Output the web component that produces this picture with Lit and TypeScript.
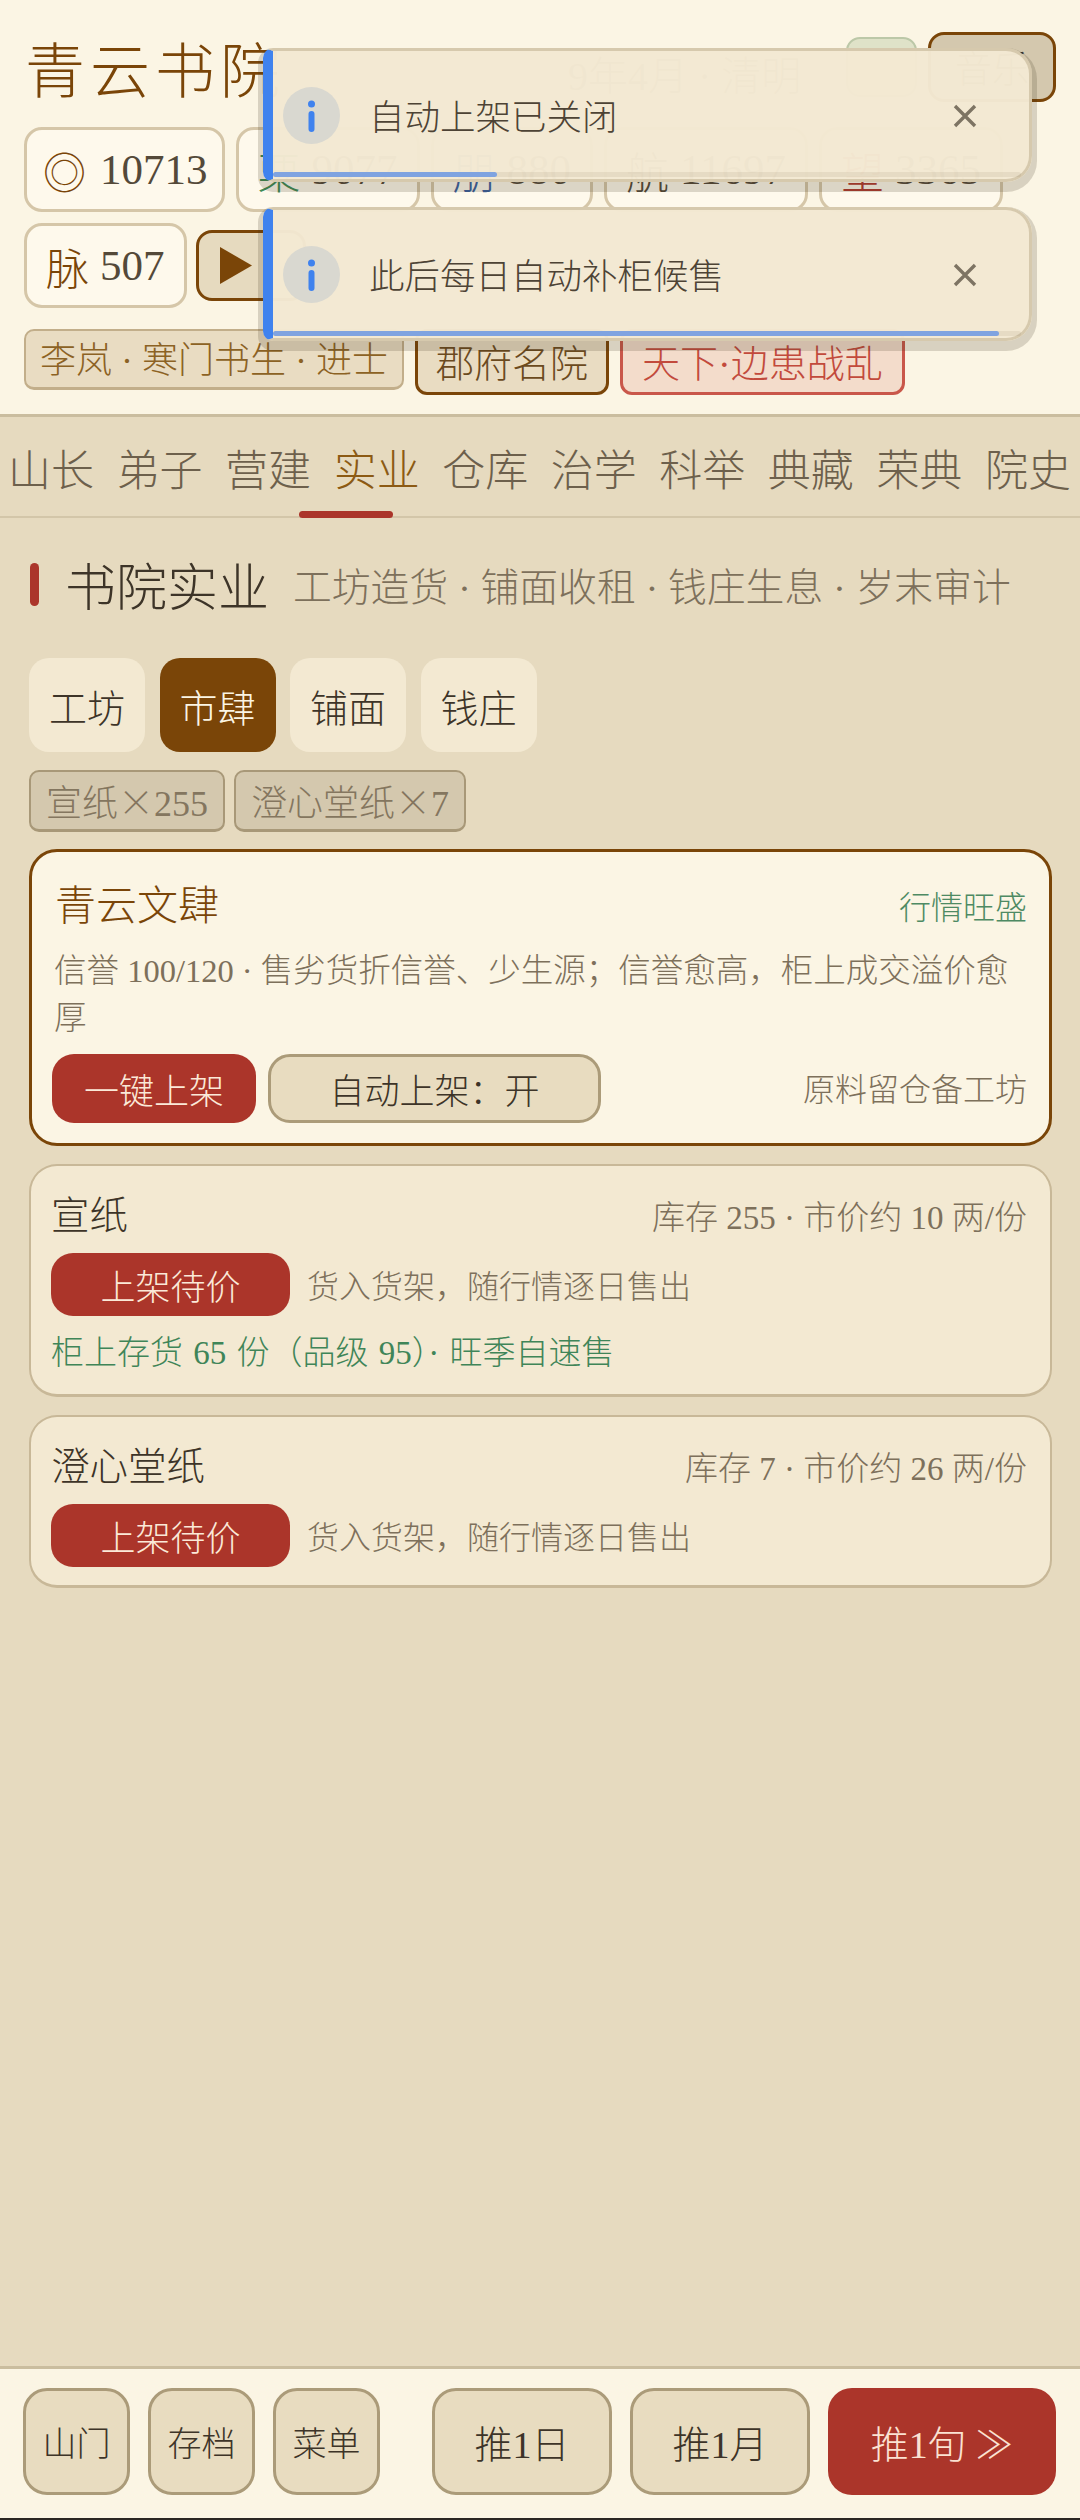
import { LitElement, css, html } from 'lit';
import { customElement } from 'lit/decorators.js';

const TABS = ['山长', '弟子', '营建', '实业', '仓库', '治学', '科举', '典藏', '荣典', '院史'];
const SUBTABS = ['工坊', '市肆', '铺面', '钱庄'];

@customElement('app-root')
export class AppRoot extends LitElement {
  static styles = css`
    :host {
      display: flex;
      flex-direction: column;
      position: relative;
      height: 2520px;
      background: #e6dabf;
      color: #3d3428;
      font-family: 'Liberation Serif', 'Noto Sans CJK SC', serif;
      font-weight: 200;
      overflow: hidden;
      box-sizing: border-box;
      border-bottom: 2px solid #2a2622;
    }

    button {
      font: inherit;
      color: inherit;
      padding: 0;
      background: none;
      border: none;
    }

    /* header */
    header {
      background: #fbf5e4;
      border-bottom: 3px solid #cabd9f;
      height: 417px;
      flex: none;
      box-sizing: border-box;
      padding: 32px 24px 0;
    }

    .top {
      display: flex;
      align-items: flex-start;
      height: 95px;
    }

    .brand {
      font-size: 60px;
      line-height: 76px;
      letter-spacing: 5px;
      color: #7a4508;
      margin: 3px 0 0 1px;
    }

    .date {
      margin-left: 283px;
      margin-top: 20px;
      font-size: 40px;
      line-height: 50px;
      color: #7d705b;
      white-space: nowrap;
    }

    .top-actions {
      display: flex;
      gap: 11px;
      margin-left: auto;
    }

    .top-green {
      width: 71px;
      height: 60px;
      margin-top: 5px;
      background: #dfe2c8;
      border: 2px solid #bcc8a8;
      border-radius: 14px;
      box-sizing: border-box;
    }

    .top-brown {
      width: 128px;
      height: 70px;
      background: #d4c8ae;
      border: 3px solid #7a4508;
      border-radius: 16px;
      box-sizing: border-box;
      font-size: 37px;
    }

    .stats {
      display: flex;
      flex-wrap: wrap;
      gap: 11px;
    }

    .stat {
      display: flex;
      align-items: center;
      gap: 11px;
      height: 85px;
      padding: 0 19px;
      box-sizing: border-box;
      background: #fef9ec;
      border: 3px solid #d5c6a8;
      border-radius: 18px;
      font-size: 43px;
      color: #544939;
      white-space: nowrap;
    }

    .stat.coin { padding: 0 14px 0 16px; gap: 14px; }
    .stat .k { color: #7a4508; }
    .stat .g { color: #3f8a55; }
    .stat .b { color: #3a5f9f; }
    .stat .r { color: #b03a2e; }

    .play {
      width: 110px;
      height: 71px;
      margin: 7px 0 0 -2px;
      box-sizing: border-box;
      background: #e6dabf;
      border: 3px solid #7a4508;
      border-radius: 16px;
      display: flex;
      align-items: center;
      padding-left: 21px;
    }

    .tags {
      display: flex;
      gap: 11px;
      align-items: flex-start;
      margin-top: 21px;
    }

    .tag {
      height: 61px;
      box-sizing: border-box;
      padding: 0 14px;
      font-size: 36px;
      line-height: 60px;
      border: 2px solid #c2ae8a;
      border-bottom-width: 3px;
      background: #e9dcc2;
      color: #8c6224;
      border-radius: 10px;
      white-space: nowrap;
    }

    .tag.outline {
      height: 66px;
      line-height: 64px;
      font-size: 38px;
      padding: 0 18px;
      border: 3px solid #7a4508;
      color: #6b4a1e;
      border-radius: 12px;
    }

    .tag.alert {
      height: 66px;
      line-height: 64px;
      font-size: 38px;
      padding: 0 19px;
      border: 3px solid #c9574a;
      background: #f3dccb;
      color: #c24a3c;
      border-radius: 12px;
    }

    /* tabs */
    nav {
      display: flex;
      justify-content: space-between;
      padding: 0 9px 0 8px;
      height: 101px;
      border-bottom: 2px solid #d3c6a9;
      box-sizing: border-box;
      flex: none;
    }

    .tab {
      position: relative;
      font-size: 43px;
      line-height: 62px;
      padding-top: 24px;
      color: #6d604c;
      white-space: nowrap;
    }

    .tab.on { color: #8c5a14; }

    .tab.on::after {
      content: '';
      position: absolute;
      left: -35px;
      width: 94px;
      top: 94px;
      height: 7px;
      border-radius: 4px;
      background: #ab352a;
    }

    main {
      flex: 1;
      padding: 44px 28px 0 29px;
    }

    .heading {
      display: flex;
      align-items: center;
      height: 44px;
    }

    .mark {
      flex: none;
      width: 9px;
      height: 43px;
      border-radius: 5px;
      background: #ab352a;
      margin-left: 1px;
      margin-right: 26px;
    }

    .heading h2 {
      margin: 0 24px 0 0;
      font-size: 51px;
      font-weight: 200;
      color: #3d3428;
      white-space: nowrap;
    }

    .heading span {
      font-size: 38.8px;
      color: #7d705b;
      white-space: nowrap;
    }

    .subtabs {
      display: flex;
      gap: 14.5px;
      margin-top: 52px;
    }

    .subtab {
      width: 116px;
      height: 94px;
      border-radius: 20px;
      background: #f3e9d2;
      font-size: 38px;
    }

    .subtab.on {
      background: #7a4508;
      color: #fbf5e4;
    }

    .stock {
      display: flex;
      gap: 9px;
      margin-top: 18px;
    }

    .chip {
      height: 62px;
      padding: 0 15px;
      box-sizing: border-box;
      border: 2px solid #a89878;
      border-bottom-width: 3px;
      border-radius: 10px;
      background: #d4c8ae;
      color: #84765f;
      font-size: 36px;
      line-height: 56px;
      white-space: nowrap;
    }

    .mul { font-family: 'Noto Sans CJK SC', sans-serif; }

    .card {
      margin-top: 18px;
      padding: 22px 23px 18px 20px;
      border: 2px solid #c8b898;
      border-bottom-width: 3px;
      border-radius: 28px;
      background: #f3e9d2;
    }

    .card.shop {
      margin-top: 17px;
      height: 297px;
      box-sizing: border-box;
      padding: 26px 22px 0 23px;
      border: 3px solid #7a4508;
      background: #fbf5e4;
    }

    .row {
      display: flex;
      align-items: center;
      justify-content: space-between;
    }

    .name {
      font-size: 38.5px;
      line-height: 56px;
      white-space: nowrap;
    }

    .shop .name {
      font-size: 41px;
      color: #7a4508;
    }

    .good { color: #4e8a63; font-size: 32px; margin-bottom: 3px; }

    .desc {
      font-size: 32.5px;
      line-height: 47px;
      color: #7d705b;
      margin: 14px 0 0 -1px;
    }

    .note { font-size: 32px; color: #7d705b; white-space: nowrap; margin-bottom: 2px; }
    .meta { font-size: 33px; color: #7d705b; white-space: nowrap; margin-bottom: 3px; }

    .actions {
      display: flex;
      align-items: center;
      margin-top: 12px;
      gap: 12px;
    }

    .primary, .secondary {
      height: 69px;
      border-radius: 22px;
      font-size: 35px;
      box-sizing: border-box;
    }

    .primary {
      background: #ab352a;
      color: #fbe9d8;
    }

    .secondary {
      background: #e8dcc0;
      border: 3px solid #ab9b79;
    }

    .shop .primary { width: 204px; margin-left: -3px; }
    .shop .secondary { width: 333px; }
    .shop .note { margin-left: auto; margin-bottom: 3px; }

    .goods-row {
      display: flex;
      align-items: center;
      gap: 17px;
      margin-top: 9px;
    }

    .goods-row .primary {
      width: 239px;
      height: 63px;
    }

    .shelf {
      color: #3f8558;
      font-size: 33px;
      word-spacing: 2px;
      line-height: 46px;
      margin-top: 14px;
    }

    /* footer */
    footer {
      flex: none;
      height: 152px;
      box-sizing: border-box;
      background: #fbf5e4;
      border-top: 3px solid #cabd9f;
      padding: 19px 24px 0 23px;
      display: flex;
      gap: 18px;
    }

    .foot {
      height: 107px;
      box-sizing: border-box;
      background: #e8dcc0;
      border: 3px solid #ab9b79;
      border-radius: 24px;
      white-space: nowrap;
    }

    .foot.small { width: 107px; font-size: 34px; }
    .foot.big { width: 180px; font-size: 38px; }
    .foot.big.first { margin-left: 34px; }

    .foot.go {
      width: 228px;
      background: #ab352a;
      border: none;
      color: #fbe2d2;
      font-size: 38px;
    }

    /* toasts */
    .toast {
      position: absolute;
      left: 263px;
      width: 769px;
      height: 134px;
      box-sizing: border-box;
      background: rgba(243, 233, 210, 0.98);
      border: 3px solid #d6c9ad;
      border-left: 10px solid #3f82ee;
      border-radius: 10px 26px 26px 10px;
      box-shadow: 0 5px 0 5px rgba(60, 50, 30, 0.18);
      display: flex;
      align-items: center;
      padding-left: 10px;
    }

    .toast .ico {
      width: 57px;
      height: 57px;
      flex: none;
    }

    .toast .msg {
      font-size: 35.5px;
      margin: 0 0 2px 29px;
      color: #4d4335;
      white-space: nowrap;
    }

    .toast .x {
      position: absolute;
      right: 52px;
      top: 53px;
      width: 24px;
      height: 24px;
    }

    .track {
      position: absolute;
      left: 0;
      right: 8px;
      bottom: 2px;
      height: 5px;
      border-radius: 3px;
      background: rgba(120, 100, 70, 0.1);
    }

    .fill {
      height: 100%;
      border-radius: 3px;
      background: #7fa3e0;
    }
  `;

  private renderToast(top: number, msg: string, progress: number) {
    return html`
      <div class="toast" style="top:${top}px">
        <svg class="ico" viewBox="0 0 57 57">
          <circle cx="28.5" cy="28.5" r="28.5" fill="#d9d8d0" />
          <circle cx="28.5" cy="17" r="3.5" fill="#3f82ee" />
          <rect x="25.5" y="24" width="6" height="21" rx="3" fill="#3f82ee" />
        </svg>
        <span class="msg">${msg}</span>
        <svg class="x" viewBox="0 0 24 24">
          <path d="M2 2 L22 22 M22 2 L2 22" stroke="#7d7463" stroke-width="3.4" fill="none" />
        </svg>
        <div class="track"><div class="fill" style="width:${progress}%"></div></div>
      </div>
    `;
  }

  render() {
    return html`
      <header>
        <div class="top">
          <div class="brand">青云书院</div>
          <div class="date">9年4月 · 清明</div>
          <div class="top-actions">
            <div class="top-green"></div>
            <button class="top-brown">音乐</button>
          </div>
        </div>
        <div class="stats">
          <div class="stat coin"><span class="k">◎</span><span>10713</span></div>
          <div class="stat"><span class="g">粟</span><span>9077</span></div>
          <div class="stat"><span class="b">朋</span><span>880</span></div>
          <div class="stat"><span>航</span><span>11697</span></div>
          <div class="stat"><span class="r">望</span><span>3365</span></div>
          <div class="stat"><span class="k">脉</span><span>507</span></div>
          <div class="play">
            <svg width="32" height="37" viewBox="0 0 32 37"><path d="M0 0 L32 18.5 L0 37 Z" fill="#7a4508" /></svg>
          </div>
        </div>
        <div class="tags">
          <div class="tag">李岚 · 寒门书生 · 进士</div>
          <div class="tag outline">郡府名院</div>
          <div class="tag alert">天下·边患战乱</div>
        </div>
      </header>

      <nav>
        ${TABS.map((t) => html`<div class="tab ${t === '实业' ? 'on' : ''}">${t}</div>`)}
      </nav>

      <main>
        <div class="heading">
          <div class="mark"></div>
          <h2>书院实业</h2>
          <span>工坊造货 · 铺面收租 · 钱庄生息 · 岁末审计</span>
        </div>

        <div class="subtabs">
          ${SUBTABS.map((t) => html`<button class="subtab ${t === '市肆' ? 'on' : ''}">${t}</button>`)}
        </div>

        <div class="stock">
          <div class="chip">宣纸<span class="mul">×</span>255</div>
          <div class="chip">澄心堂纸<span class="mul">×</span>7</div>
        </div>

        <div class="card shop">
          <div class="row">
            <div class="name">青云文肆</div>
            <div class="good">行情旺盛</div>
          </div>
          <div class="desc">信誉 100/120 · 售劣货折信誉、少生源；信誉愈高，柜上成交溢价愈厚</div>
          <div class="actions">
            <button class="primary">一键上架</button>
            <button class="secondary">自动上架：开</button>
            <div class="note">原料留仓备工坊</div>
          </div>
        </div>

        <div class="card">
          <div class="row">
            <div class="name">宣纸</div>
            <div class="meta">库存 255 · 市价约 10 两/份</div>
          </div>
          <div class="goods-row">
            <button class="primary">上架待价</button>
            <div class="note">货入货架，随行情逐日售出</div>
          </div>
          <div class="shelf">柜上存货 65 份（品级 95）· 旺季自速售</div>
        </div>

        <div class="card">
          <div class="row">
            <div class="name">澄心堂纸</div>
            <div class="meta">库存 7 · 市价约 26 两/份</div>
          </div>
          <div class="goods-row">
            <button class="primary">上架待价</button>
            <div class="note">货入货架，随行情逐日售出</div>
          </div>
        </div>
      </main>

      <footer>
        <button class="foot small">山门</button>
        <button class="foot small">存档</button>
        <button class="foot small">菜单</button>
        <button class="foot big first">推1日</button>
        <button class="foot big">推1月</button>
        <button class="foot go">推1旬 ≫</button>
      </footer>

      ${this.renderToast(48, '自动上架已关闭', 30)}
      ${this.renderToast(207, '此后每日自动补柜候售', 97)}
    `;
  }
}

declare global {
  interface HTMLElementTagNameMap {
    'app-root': AppRoot;
  }
}
